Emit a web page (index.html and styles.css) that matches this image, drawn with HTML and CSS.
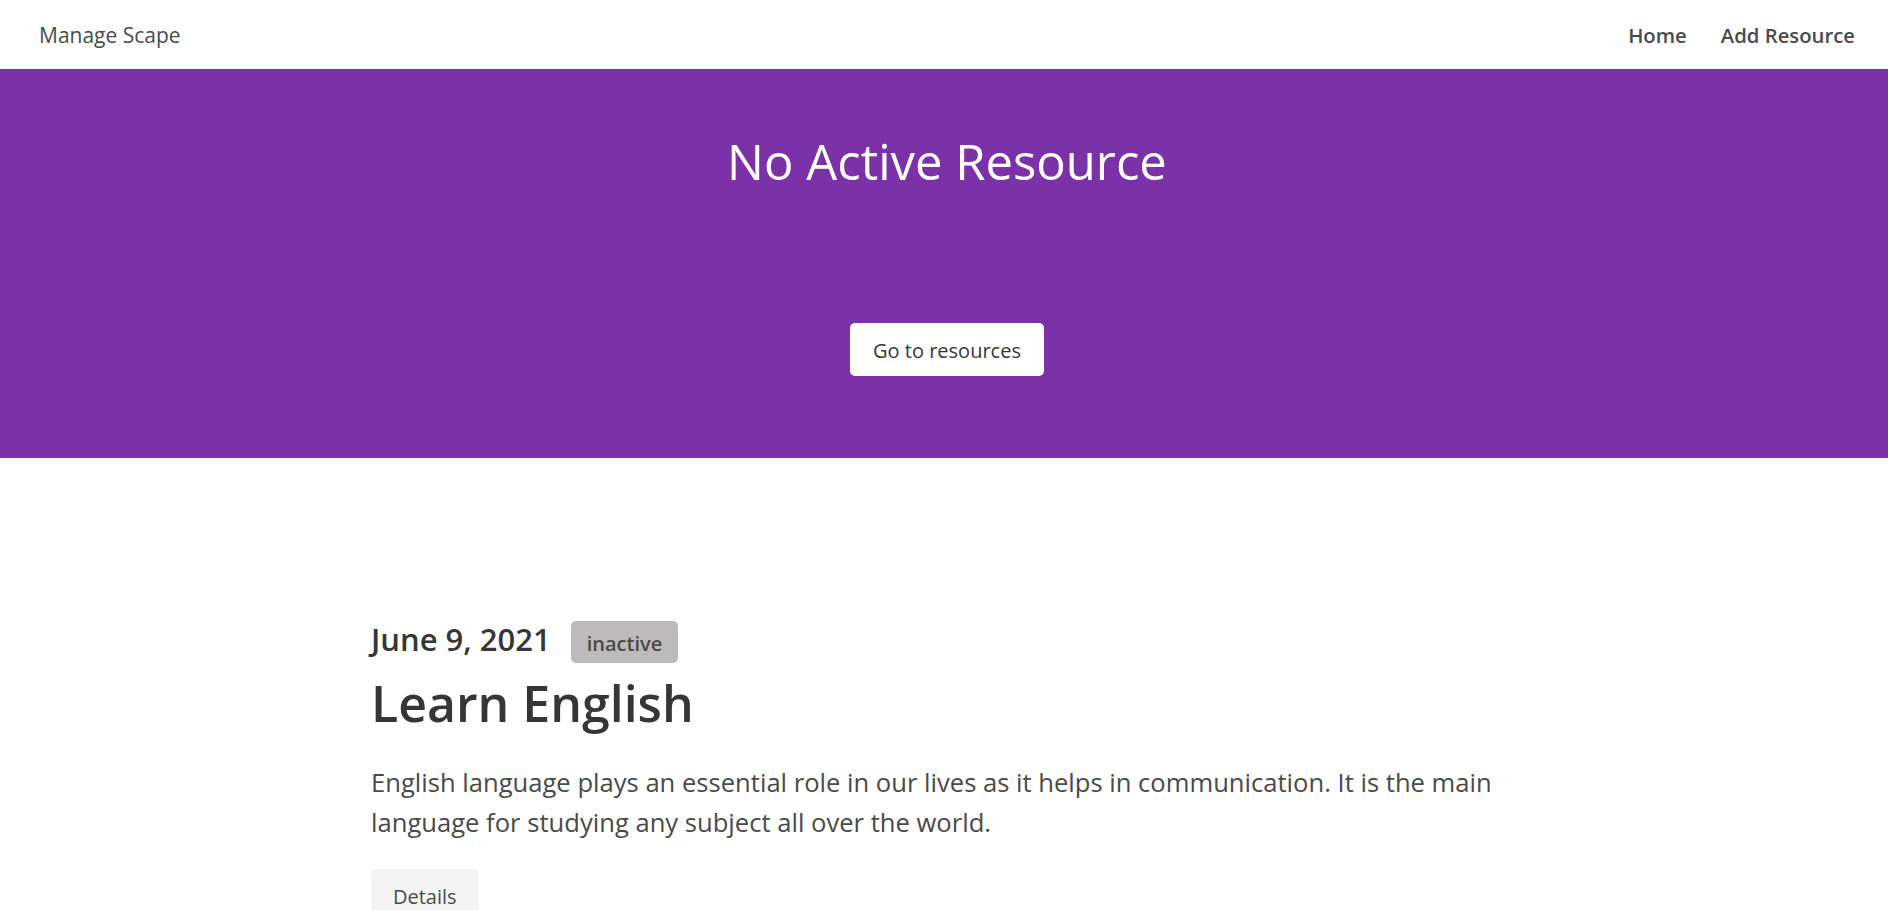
FILE: index.html
```html
<!DOCTYPE html>
<html lang="en">
<head>
<meta charset="utf-8">
<title>Manage Scape</title>
<link rel="stylesheet" href="styles.css">
</head>
<body>
<nav class="navbar">
  <a class="brand" href="#">Manage Scape</a>
  <div class="nav-links">
    <a class="nav-link" href="#">Home</a>
    <a class="nav-link" href="#">Add Resource</a>
  </div>
</nav>
<section class="hero">
  <h1 class="hero-title">No Active Resource</h1>
  <a class="hero-button" href="#">Go to resources</a>
</section>
<section class="resources">
  <article class="resource">
    <div class="resource-meta">
      <h2 class="resource-date">June 9, 2021</h2>
      <span class="tag">inactive</span>
    </div>
    <h3 class="resource-title">Learn English</h3>
    <p class="resource-desc">English language plays an essential role in our lives as it helps in communication. It is the main language for studying any subject all over the world.</p>
    <a class="details-button" href="#">Details</a>
  </article>
</section>
</body>
</html>
```
FILE: styles.css
```css
* { box-sizing: border-box; }
html, body { margin: 0; padding: 0; }
body {
  font-family: "Open Sans", "Noto Sans", sans-serif;
  color: #4a4a4a;
  background: #fff;
}
a { text-decoration: none; color: inherit; }
h1, h2, h3, p { margin: 0; }

.navbar {
  height: 69px;
  display: flex;
  align-items: center;
  justify-content: space-between;
  padding: 0 33px 0 39px;
  background: #fff;
}
.brand {
  font-size: 21px;
  line-height: 28px;
  color: #4a4a4a;
}
.nav-links {
  display: flex;
  gap: 34px;
}
.nav-link {
  font-size: 20.3px;
  line-height: 28px;
  font-weight: 600;
  color: #4a4a4a;
}

.hero {
  background: #7b31a8;
  display: flex;
  flex-direction: column;
  align-items: center;
  padding: 65px 0 82px 6px;
}
.hero-title {
  font-size: 49px;
  line-height: 54px;
  font-weight: 400;
  color: #fff;
  margin-bottom: 135px;
}
.hero-button {
  background: #fff;
  color: #363636;
  font-size: 20px;
  line-height: 24px;
  padding: 16px 23px 13px;
  border-radius: 5px;
}

.resources {
  padding-top: 163px;
}
.resource {
  width: 1146px;
  margin: 0 auto;
}
.resource-meta {
  display: flex;
  align-items: baseline;
  gap: 20px;
}
.resource-date {
  font-size: 31px;
  line-height: 36px;
  font-weight: 600;
  color: #363636;
}
.tag {
  background: #bcbabb;
  color: #4a4a4a;
  font-size: 20px;
  line-height: 24px;
  font-weight: 600;
  padding: 11px 16px 7px;
  border-radius: 5px;
}
.resource-title {
  font-size: 50px;
  line-height: 56px;
  font-weight: 600;
  color: #363636;
  margin-top: 12px;
}
.resource-desc {
  font-size: 25.6px;
  line-height: 40px;
  color: #4a4a4a;
  margin-top: 32px;
}
.details-button {
  display: inline-block;
  margin-top: 26px;
  background: #f4f4f4;
  color: #4a4a4a;
  font-size: 20px;
  line-height: 24px;
  padding: 16px 22px 13px;
  border-radius: 5px;
}
```
